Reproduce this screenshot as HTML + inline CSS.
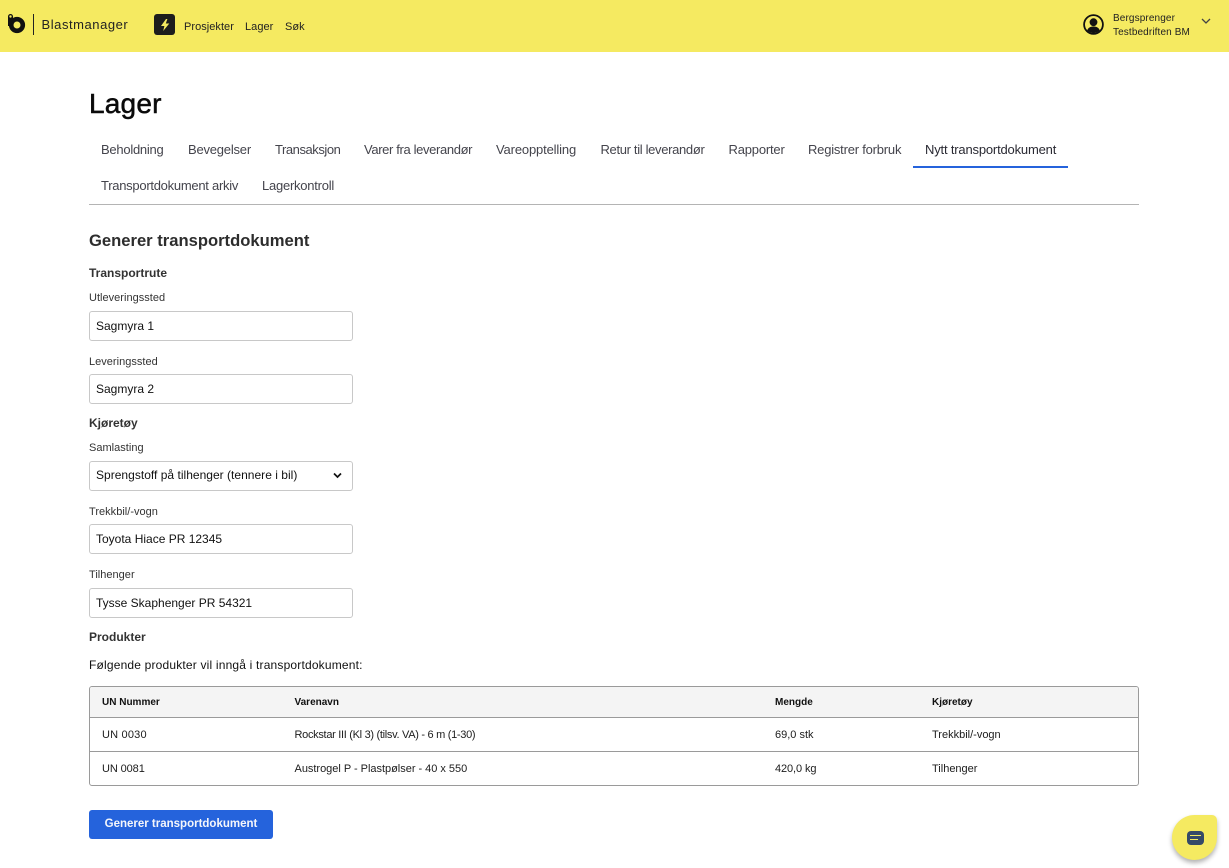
<!DOCTYPE html>
<html lang="no">
<head>
<meta charset="utf-8">
<title>Lager - Blastmanager</title>
<style>
html,body{margin:0;padding:0;background:#fff}
body{width:1229px;height:868px;position:relative;overflow:hidden;font-family:"Liberation Sans",sans-serif;color:#1c1c1c}
.t{position:absolute;white-space:nowrap;line-height:16px}
header{position:absolute;left:0;top:0;width:1229px;height:52px;background:#f5ea61}
.tab{font-size:13px;color:#44444c}
.lab{font-size:11px;color:#333;letter-spacing:.02px}
.sec{font-size:12px;font-weight:bold;color:#333}
.inp{position:absolute;left:89px;width:262px;height:28px;border:1px solid #c8c8c8;border-radius:3px;background:#fff;font-size:12px;line-height:28px;color:#111;text-indent:6px;letter-spacing:0;white-space:nowrap}
.th{font-size:10px;font-weight:bold;color:#111}
.td{font-size:11px;color:#1c1c1c}
</style>
</head>
<body>
<header>
<svg style="position:absolute;left:7px;top:13px" width="20" height="22" viewBox="0 0 20 22">
<path d="M1 3.500a2.500 2.500 0 0 1 5 0V8H1z" fill="#111"/>
<circle cx="3.500" cy="3.500" r="1.200" fill="#f5ea61"/>
<circle cx="10" cy="12" r="5.800" fill="none" stroke="#111" stroke-width="4.600"/>
<path d="M1 7h4.500v6H1z" fill="#111"/>
</svg>
<div style="position:absolute;left:33px;top:14px;width:1px;height:21px;background:#222"></div>
<div class="t" style="left:41.500px;top:17px;font-size:13px;color:#222;letter-spacing:.55px">Blastmanager</div>
<svg style="position:absolute;left:154px;top:14px" width="21" height="21" viewBox="0 0 21 21">
<rect width="21" height="21" rx="3" fill="#1d1d1d"/>
<path d="M12 5 7 12h3.400L9.200 17l6.100-7.500h-3.500L13.400 5z" fill="#f5ea61"/>
</svg>
<div class="t" style="left:184px;top:19px;font-size:11px;color:#222;letter-spacing:.04px">Prosjekter</div>
<div class="t" style="left:245px;top:19px;font-size:11px;color:#222;letter-spacing:.04px">Lager</div>
<div class="t" style="left:285px;top:19px;font-size:11px;color:#222;letter-spacing:.04px">Søk</div>
<svg style="position:absolute;left:1083px;top:14px" width="21" height="21" viewBox="0 0 21 21">
<circle cx="10.500" cy="10.500" r="9.400" fill="none" stroke="#111" stroke-width="1.800"/>
<circle cx="10.500" cy="8.200" r="3.900" fill="#111"/>
<path d="M4.200 16.500c.8-2.800 3.200-4 6.300-4s5.500 1.200 6.300 4a9 9 0 0 1-12.600 0z" fill="#111"/>
</svg>
<div class="t" style="left:1113px;top:11px;font-size:10px;color:#222;letter-spacing:.12px">Bergsprenger</div>
<div class="t" style="left:1113px;top:25px;font-size:10px;color:#222;letter-spacing:.12px">Testbedriften BM</div>
<svg style="position:absolute;left:1201px;top:18px" width="10" height="7" viewBox="0 0 10 7">
<path d="M1 1l4 4 4-4" fill="none" stroke="#444" stroke-width="1.300"/>
</svg>
</header>

<div class="t" style="left:89px;top:88px;font-size:28px;line-height:32px;color:#0a0a0a;letter-spacing:.2px;-webkit-text-stroke:.5px #0a0a0a">Lager</div>

<div class="t tab" style="left:101px;top:142px;letter-spacing:-.26px">Beholdning</div>
<div class="t tab" style="left:188px;top:142px;letter-spacing:-.21px">Bevegelser</div>
<div class="t tab" style="left:275px;top:142px;letter-spacing:-.45px">Transaksjon</div>
<div class="t tab" style="left:364px;top:142px;letter-spacing:-.36px">Varer fra leverandør</div>
<div class="t tab" style="left:496px;top:142px;letter-spacing:-.15px">Vareopptelling</div>
<div class="t tab" style="left:600.500px;top:142px;letter-spacing:-.33px">Retur til leverandør</div>
<div class="t tab" style="left:728.500px;top:142px;letter-spacing:-.19px">Rapporter</div>
<div class="t tab" style="left:808px;top:142px;letter-spacing:-.21px">Registrer forbruk</div>
<div class="t tab" style="left:925px;top:142px;color:#2a2a33;letter-spacing:-.18px">Nytt transportdokument</div>
<div style="position:absolute;left:913px;top:166px;width:155px;height:2px;background:#2563dc"></div>
<div class="t tab" style="left:101px;top:178px;letter-spacing:-.27px">Transportdokument arkiv</div>
<div class="t tab" style="left:262px;top:178px;letter-spacing:-.24px">Lagerkontroll</div>
<div style="position:absolute;left:89px;top:204px;width:1050px;height:1px;background:#b4b4b4"></div>

<div class="t" style="left:89px;top:233px;font-size:16.600px;font-weight:bold;color:#2d2d2d">Generer transportdokument</div>
<div class="t sec" style="left:89px;top:265px">Transportrute</div>
<div class="t lab" style="left:89px;top:290px">Utleveringssted</div>
<div class="inp" style="top:311px">Sagmyra 1</div>
<div class="t lab" style="left:89px;top:354px">Leveringssted</div>
<div class="inp" style="top:374px">Sagmyra 2</div>
<div class="t sec" style="left:89px;top:415px">Kjøretøy</div>
<div class="t lab" style="left:89px;top:440px">Samlasting</div>
<div class="inp" style="top:461px;line-height:26px;letter-spacing:.02px">Sprengstoff på tilhenger (tennere i bil)
<svg style="position:absolute;left:243px;top:10px" width="9" height="7" viewBox="0 0 9 7"><path d="M1 1.500l3.500 3.500L8 1.500" fill="none" stroke="#111" stroke-width="1.700"/></svg>
</div>
<div class="t lab" style="left:89px;top:504px">Trekkbil/-vogn</div>
<div class="inp" style="top:524px">Toyota Hiace PR 12345</div>
<div class="t lab" style="left:89px;top:567px">Tilhenger</div>
<div class="inp" style="top:588px">Tysse Skaphenger PR 54321</div>
<div class="t sec" style="left:89px;top:629px">Produkter</div>
<div class="t" style="left:89px;top:657px;font-size:12px;color:#111;letter-spacing:.18px">Følgende produkter vil inngå i transportdokument:</div>

<div style="position:absolute;left:89px;top:686px;width:1048px;height:98px;border:1px solid #9a9a9a;border-radius:3px;overflow:hidden;background:#fff">
<div style="position:absolute;left:0;top:0;width:1048px;height:30px;background:#f4f4f4;border-bottom:1px solid #9a9a9a"></div>
<div style="position:absolute;left:0;top:64px;width:1048px;height:1px;background:#9a9a9a"></div>
</div>
<div class="t th" style="left:102px;top:695px">UN Nummer</div>
<div class="t th" style="left:294.500px;top:695px">Varenavn</div>
<div class="t th" style="left:775px;top:695px">Mengde</div>
<div class="t th" style="left:932px;top:695px">Kjøretøy</div>
<div class="t td" style="left:102px;top:727px;letter-spacing:.2px">UN 0030</div>
<div class="t td" style="left:294.500px;top:727px;letter-spacing:-.3px">Rockstar III (Kl 3) (tilsv. VA) - 6 m (1-30)</div>
<div class="t td" style="left:775px;top:727px">69,0 stk</div>
<div class="t td" style="left:932px;top:727px">Trekkbil/-vogn</div>
<div class="t td" style="left:102px;top:761px;letter-spacing:-.1px">UN 0081</div>
<div class="t td" style="left:294.500px;top:761px;letter-spacing:-.02px">Austrogel P - Plastpølser - 40 x 550</div>
<div class="t td" style="left:775px;top:761px;letter-spacing:-.1px">420,0 kg</div>
<div class="t td" style="left:932px;top:761px">Tilhenger</div>

<div style="position:absolute;left:89px;top:810px;width:184px;height:29px;background:#2563dc;border-radius:3px;color:#f4f6fb;font-size:11.500px;font-weight:bold;line-height:29px;text-align:center">Generer transportdokument</div>

<div style="position:absolute;left:1172px;top:815px;width:45px;height:45px;background:#f5ea61;border-radius:50% 5px 50% 50%;box-shadow:0 3px 5px rgba(0,0,0,.3)"></div>
<svg style="position:absolute;left:1187px;top:831px" width="17" height="14" viewBox="0 0 17 14">
<rect width="17" height="14" rx="4" fill="#354a68"/>
<path d="M3 4.500h11M3 8.500h8" stroke="#f5ea61" stroke-width="1.100"/>
</svg>
</body>
</html>
